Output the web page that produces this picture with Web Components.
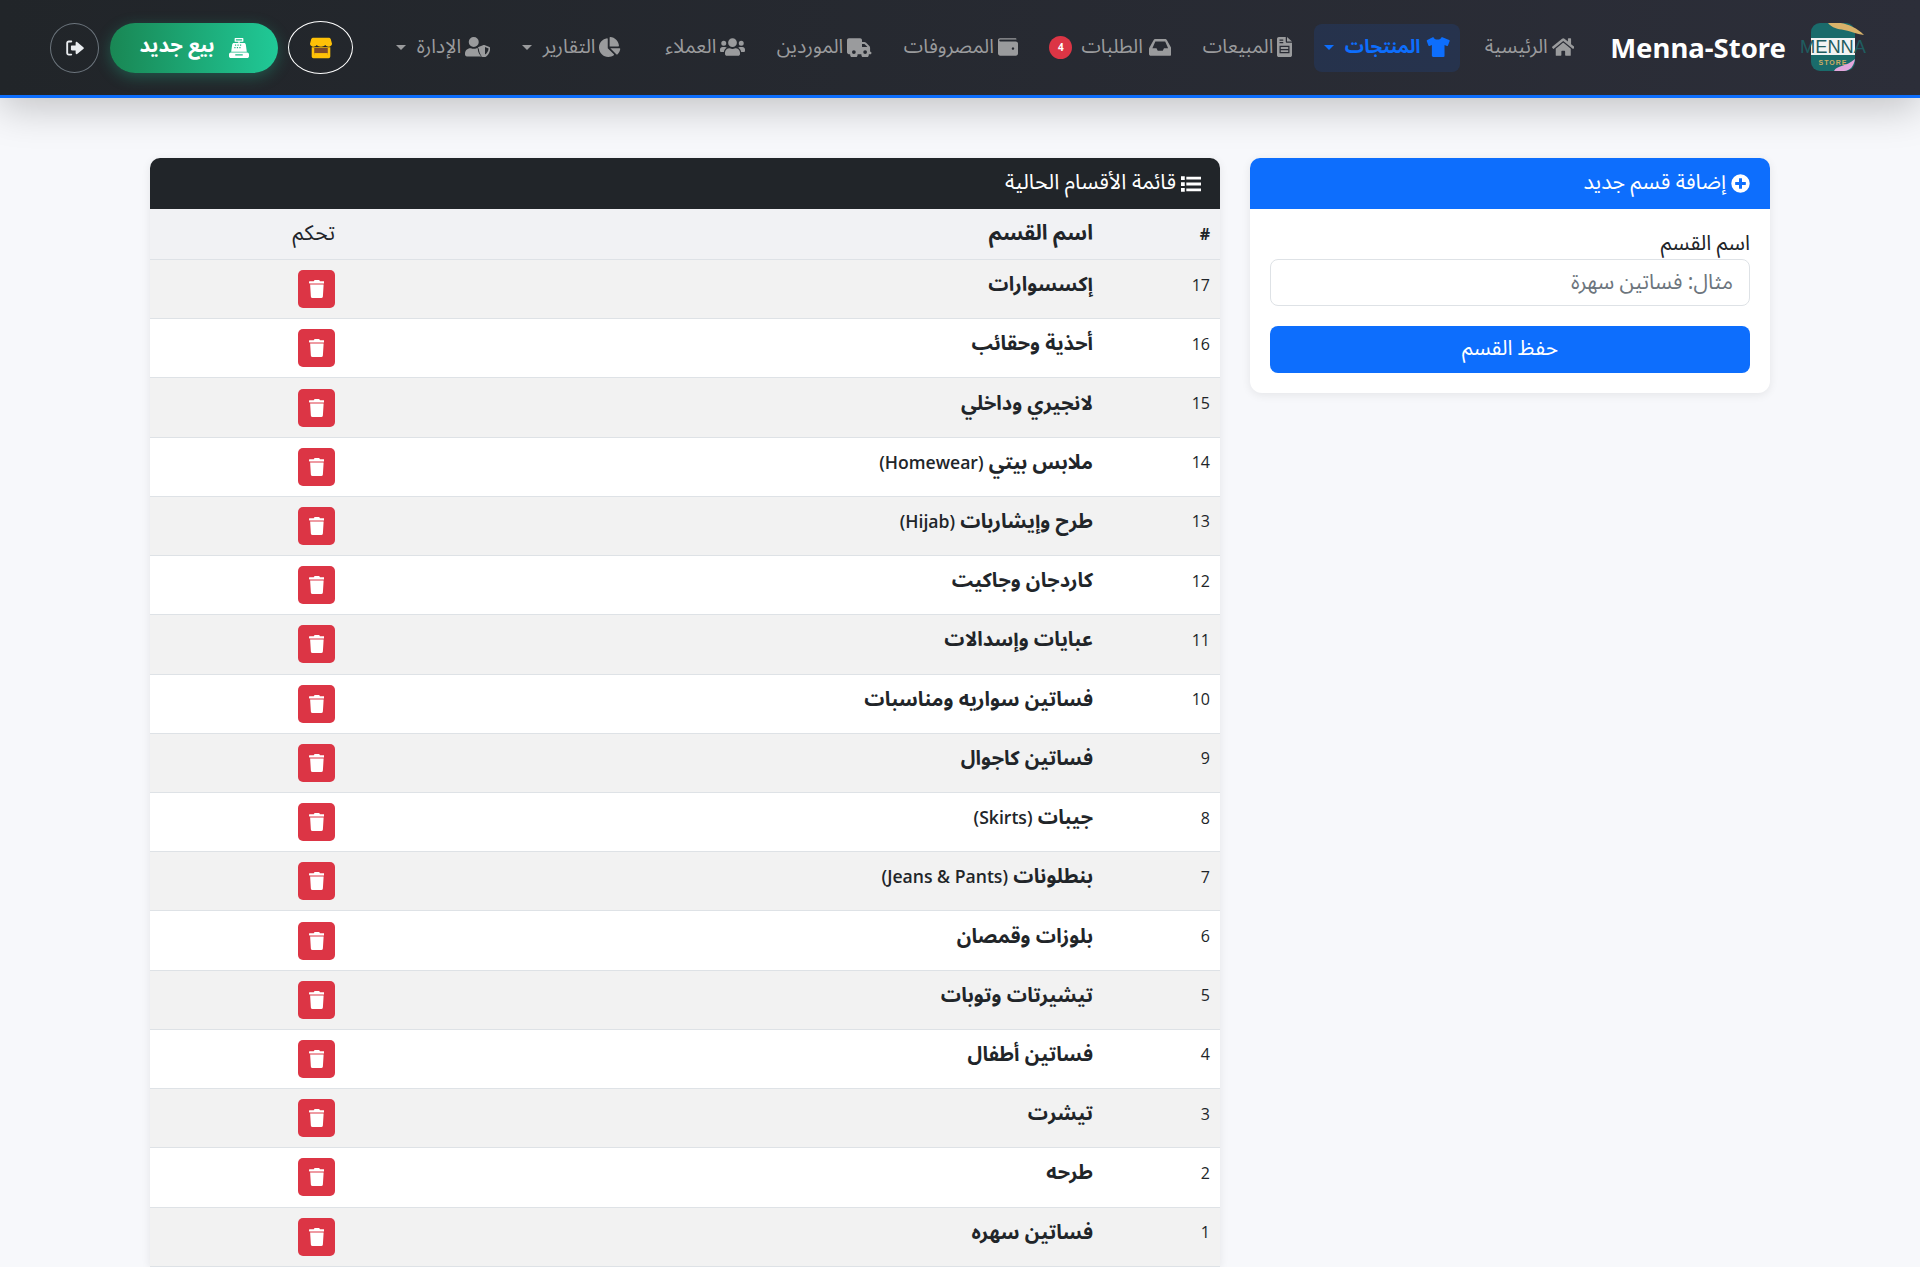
<!DOCTYPE html>
<html lang="ar" dir="rtl">
<head>
<meta charset="utf-8">
<title>Menna-Store</title>
<style>
    html, body { margin: 0; padding: 0; }
    body {
        background: #f7f8fb;
        color: #212529;
        font-family: "Noto Sans Arabic", "Open Sans", "DejaVu Sans", sans-serif;
        font-size: 16px;
    }
</style>
</head>
<body>
<app-navbar></app-navbar>
<main-layout>
    <category-table slot="table"></category-table>
    <add-category slot="form"></add-category>
</main-layout>

<script>
const ICONS = {
    home: ['0 0 576 512', 'M280.37 148.26L96 300.11V464a16 16 0 0 0 16 16l112.06-.29a16 16 0 0 0 15.92-16V368a16 16 0 0 1 16-16h64a16 16 0 0 1 16 16v95.64a16 16 0 0 0 16 16.05L464 480a16 16 0 0 0 16-16V300L295.67 148.26a12.19 12.19 0 0 0-15.3 0zM571.6 251.47L488 182.56V44.05a12 12 0 0 0-12-12h-56a12 12 0 0 0-12 12v72.61L318.47 43a48 48 0 0 0-61 0L4.34 251.47a12 12 0 0 0-1.6 16.9l25.5 31A12 12 0 0 0 45.15 301l235.22-193.74a12.19 12.19 0 0 1 15.3 0L530.9 301a12 12 0 0 0 16.9-1.6l25.5-31a12 12 0 0 0-1.7-16.93z'],
    shirt: ['0 0 640 512', 'M211 0c14 40 58 66 109 66s95-26 109-66l190 76c11 4 17 17 13 28l-44 112c-4 11-17 17-28 12l-60-24v284c0 13-11 24-24 24H200c-13 0-24-11-24-24V204l-60 24c-11 5-24-1-28-12L44 104c-4-11 2-24 13-28z'],
    invoice: ['0 0 384 512', 'M48 0h176v112c0 18 14 32 32 32h128v320c0 27-21 48-48 48H48c-27 0-48-21-48-48V48C0 21 21 0 48 0zm208 0l128 112H256zM64 64v32h96V64zm0 64v32h96v-32zm0 96v192h256V224zm32 32h192v48H96zm0 80h192v48H96z'],
    inbox: ['0 0 576 512', 'M568 277L460 80c-10-18-29-32-50-32H166c-21 0-40 14-50 32L8 277c-5 9-8 19-8 29v126c0 26 22 48 48 48h480c26 0 48-22 48-48V306c0-10-3-20-8-29zM162 112h252l75 176H384l-32 64H224l-32-64H87z'],
    wallet: ['0 0 512 512', 'M48 32h400c13 0 24 11 24 24v8H56c-13 0-24 11-24 24s11 24 24 24h400c31 0 56 25 56 56v256c0 31-25 56-56 56H56c-31 0-56-25-56-56V80c0-27 21-48 48-48zm368 264a32 32 0 1 0 0 1z'],
    truck: ['0 0 640 512', 'M48 32h288c26 0 48 22 48 48v48h60c17 0 33 7 45 19l83 83c12 12 19 28 19 45v101h16c9 0 16 7 16 16v32c0 9-7 16-16 16h-48a96 96 0 0 1-192 0H272a96 96 0 0 1-192 0H48c-26 0-48-22-48-48V80c0-26 22-48 48-48zm336 144v80h136v-6l-74-74zM176 432a48 48 0 1 0 0-96 48 48 0 0 0 0 96zm288 0a48 48 0 1 0 0-96 48 48 0 0 0 0 96z'],
    users: ['0 0 640 512', 'M96 224a64 64 0 1 0 0-128 64 64 0 0 0 0 128zm448 0a64 64 0 1 0 0-128 64 64 0 0 0 0 128zm32 32h-64c-18 0-34 7-45 19 40 22 69 62 75 109h66c18 0 32-14 32-32v-32c0-35-29-64-64-64zm-256 0a112 112 0 1 0 0-224 112 112 0 0 0 0 224zm77 32h-8a157 157 0 0 1-138 0h-8c-64 0-115 52-115 115v29c0 26 21 48 48 48h288c27 0 48-22 48-48v-29c0-63-51-115-115-115zm-224-13c-11-12-27-19-45-19H64c-35 0-64 29-64 64v32c0 18 14 32 32 32h66c6-47 35-87 75-109z'],
    pie: ['0 0 544 512', 'M527 288H290l158 158c6 6 16 7 23 1 39-36 65-85 73-141 1-10-7-18-17-18zm-16-64C503 103 407 8 288 0c-9-1-16 7-16 16v224h224c9 0 16-7 15-16zM224 288V51c0-10-8-18-18-17C87 51-4 155 0 280c4 129 115 234 244 232 50-1 97-17 135-44 8-6 8-17 1-24z'],
    admin: ['0 0 640 512', 'M224 256a128 128 0 1 0 0-256 128 128 0 0 0 0 256zm88 32h-17a174 174 0 0 1-142 0h-17C61 288 0 349 0 424v24c0 27 21 48 48 48h352c9 0 17-2 25-5-42-52-66-120-73-196-13-4-27-7-40-7zm313-32l-128-50a32 32 0 0 0-23 0l-128 50c-12 5-20 16-20 29 0 125 72 211 148 240 7 3 16 3 23 0 61-23 148-100 148-240 0-13-8-24-20-29zM512 447V256l92 36c-6 80-52 131-92 155z'],
    register: ['0 0 512 512', 'M160 0h192c9 0 16 7 16 16v64c0 9-7 16-16 16h-80v32h112c24 0 44 18 47 42l25 182H56l25-182c3-24 23-42 47-42h112V96h-80c-9 0-16-7-16-16V16c0-9 7-16 16-16zm16 32v32h160V32zm-24 136v32h32v-32zm64 0v32h32v-32zm64 0v32h32v-32zm-144 64v32h32v-32zm64 0v32h32v-32zm64 0v32h32v-32zM48 368h416c26 0 48 22 48 48v48c0 26-22 48-48 48H48c-26 0-48-22-48-48v-48c0-26 22-48 48-48zm112 48v32h192v-32z'],
    logout: ['0 0 512 512', 'M96 64h64c13 0 24 11 24 24s-11 24-24 24H96c-9 0-16 7-16 16v256c0 9 7 16 16 16h64c13 0 24 11 24 24s-11 24-24 24H96c-35 0-64-29-64-64V128c0-35 29-64 64-64zm214 39l166 137c9 8 9 24 0 32L310 409c-13 11-38 3-38-16v-73H176c-13 0-24-11-24-24v-80c0-13 11-24 24-24h96v-73c0-19 25-27 38-16z'],
    plus: ['0 0 512 512', 'M256 8a248 248 0 1 0 0 496 248 248 0 0 0 0-496zm144 276c0 7-5 12-12 12h-92v92c0 7-5 12-12 12h-56c-7 0-12-5-12-12v-92h-92c-7 0-12-5-12-12v-56c0-7 5-12 12-12h92v-92c0-7 5-12 12-12h56c7 0 12 5 12 12v92h92c7 0 12 5 12 12z'],
    list: ['0 0 512 512', 'M0 56h96v96H0zm0 152h96v96H0zm0 152h96v96H0zM136 68h376v72H136zm0 152h376v72H136zm0 152h376v72H136z'],
    trash: ['0 0 448 512', 'M432 32H312l-9.4-18.7A24 24 0 0 0 281.1 0H166.8a23.72 23.72 0 0 0-21.4 13.3L136 32H16A16 16 0 0 0 0 48v32a16 16 0 0 0 16 16h416a16 16 0 0 0 16-16V48a16 16 0 0 0-16-16zM53.2 467a48 48 0 0 0 47.9 45h245.8a48 48 0 0 0 47.9-45L416 128H32z']
};

function icon(name, h) {
    const [box, d] = ICONS[name];
    const p = box.split(' ');
    const w = h * p[2] / p[3];
    return `<svg width="${w}" height="${h}" viewBox="${box}" fill="currentColor" aria-hidden="true"><path fill-rule="evenodd" d="${d}"/></svg>`;
}

class NavItem extends HTMLElement {
    connectedCallback() {
        const badge = this.getAttribute('badge');
        const caret = this.hasAttribute('caret');
        this.attachShadow({ mode: 'open' });
        this.shadowRoot.innerHTML = `
            <style>
                :host {
                    display: flex;
                    align-items: center;
                    height: 48px;
                    padding: 0 10px;
                    gap: 4px;
                    border-radius: 8px;
                    color: #9a9b9d;
                    font-size: 19.6px;
                    line-height: 26px;
                    white-space: nowrap;
                }
                :host([active]) {
                    background: rgba(13, 110, 253, .12);
                    color: #0d6efd;
                    font-weight: 700;
                    font-size: 19px;
                }
                .caret {
                    border-top: 5px solid currentColor;
                    border-left: 5px solid transparent;
                    border-right: 5px solid transparent;
                    margin-right: 7px;
                }
                .badge {
                    background: #dc3545;
                    color: #fff;
                    font-size: 10px;
                    font-weight: 700;
                    width: 23px;
                    height: 23px;
                    border-radius: 50%;
                    display: flex;
                    align-items: center;
                    justify-content: center;
                    margin-right: 3px;
                }
                .label { margin-bottom: 1px; }
                svg { display: block; margin-bottom: 2px; }
            </style>
            ${icon(this.getAttribute('icon'), 20)}
            <span class="label"><slot></slot></span>
            ${badge ? `<span class="badge">${badge}</span>` : ''}
            ${caret ? '<span class="caret"></span>' : ''}
        `;
    }
}

class AppNavbar extends HTMLElement {
    connectedCallback() {
        this.attachShadow({ mode: 'open' });
        this.shadowRoot.innerHTML = `
            <style>
                :host {
                    display: flex;
                    align-items: center;
                    height: 95px;
                    padding: 0 52px 0 50px;
                    background: linear-gradient(to left, #2c2e39, #212529);
                    border-bottom: 3px solid #0d6efd;
                    box-shadow: 0 10px 40px rgba(0, 0, 0, .22);
                }
                .logo { display: block; flex: none; }
                .brand {
                    color: #fff;
                    font: 700 27.5px "Noto Sans", "Open Sans", sans-serif;
                    margin: 0 12px 0 26px;
                    white-space: nowrap;
                }
                .links { display: flex; align-items: center; gap: 11.5px; flex: 1; }
                .store {
                    width: 65px;
                    height: 53px;
                    box-sizing: border-box;
                    border: 1px solid #fff;
                    border-radius: 50%;
                    display: flex;
                    align-items: center;
                    justify-content: center;
                }
                .sell {
                    width: 168px;
                    height: 50px;
                    margin-right: 10px;
                    border-radius: 25px;
                    background: linear-gradient(to left, #20c997, #198754);
                    box-shadow: 0 4px 15px rgba(32, 201, 151, .3);
                    color: #fff;
                    font-weight: 700;
                    font-size: 20.4px;
                    line-height: 26px;
                    display: flex;
                    align-items: center;
                    justify-content: center;
                    gap: 14px;
                }
                .sell span { margin-bottom: 3px; }
                .out {
                    width: 49px;
                    height: 50px;
                    margin-right: 11px;
                    box-sizing: border-box;
                    border: 1px solid #6c757d;
                    border-radius: 50%;
                    display: flex;
                    align-items: center;
                    justify-content: center;
                    color: #e9ecef;
                }
            </style>
            <svg class="logo" width="70" height="50" viewBox="0 0 70 50">
                <rect x="13" y="0" width="44" height="48" rx="9" fill="#1a6b6b"/>
                <path d="M30 0c12-2 26 2 36 12-8-1-14-4-20-5-6-1-12-2-16-7z" fill="#d8b26a"/>
                <rect x="13" y="15" width="44" height="17" fill="#f2f3f3"/>
                <text x="35" y="30" text-anchor="middle" font-family="Liberation Sans, sans-serif" font-size="18" fill="#1f5d60" textLength="66" lengthAdjust="spacingAndGlyphs" direction="ltr">MENNA</text>
                <text x="35" y="42" text-anchor="middle" font-family="Liberation Sans, sans-serif" font-size="7" font-weight="700" fill="#c9ab62" letter-spacing="1" direction="ltr">STORE</text>
                <path d="M57 36c-1 7-5 12-11 12H36c3-6 12-4 21-12z" fill="#e3a6dc"/>
            </svg>
            <span class="brand" dir="ltr">Menna-Store</span>
            <div class="links">
                <nav-item icon="home" style="padding-left: 13.7px">الرئيسية</nav-item>
                <nav-item icon="shirt" active caret>المنتجات</nav-item>
                <nav-item icon="invoice">المبيعات</nav-item>
                <nav-item icon="inbox" badge="4" style="gap: 6px">الطلبات</nav-item>
                <nav-item icon="wallet">المصروفات</nav-item>
                <nav-item icon="truck">الموردين</nav-item>
                <nav-item icon="users" style="padding-left: 23px">العملاء</nav-item>
                <nav-item icon="pie" caret>التقارير</nav-item>
                <nav-item icon="admin" caret>الإدارة</nav-item>
            </div>
            <div class="store">
                <svg width="22" height="22" viewBox="0 0 26 24">
                    <path fill="#ffc107" d="M4 0h18c1 0 2 .5 2.500 1.500L26 7c0 2-2 3.500-4 3.500-1.500 0-3-.7-4-2-1 1.300-3 2-5 2s-4-.7-5-2c-1 1.300-2.500 2-4 2C2 10.500 0 9 0 7l1.500-5.500C2 .5 3 0 4 0z"/>
                    <path fill="#ffc107" d="M2 11h22v11c0 1-1 2-2 2H4c-1 0-2-1-2-2z"/>
                    <rect x="5" y="12" width="16" height="8" fill="#7d4a2a"/>
                    <rect x="5" y="18" width="16" height="2.500" fill="#ffc107"/>
                </svg>
            </div>
            <div class="sell">${icon('register', 20)}<span>بيع جديد</span></div>
            <div class="out">${icon('logout', 20)}</div>
        `;
    }
}

class MainLayout extends HTMLElement {
    constructor() {
        super();
        this.attachShadow({ mode: 'open' });
        this.shadowRoot.innerHTML = `
            <style>
                :host {
                    display: grid;
                    grid-template-columns: 520px 1070px;
                    gap: 30px;
                    padding: 60px 150px 40px;
                    align-items: start;
                }
            </style>
            <slot name="form"></slot>
            <slot name="table"></slot>
        `;
    }
}

class AddCategory extends HTMLElement {
    constructor() {
        super();
        this.attachShadow({ mode: 'open' });
        this.shadowRoot.innerHTML = `
            <style>
                :host {
                    display: block;
                    background: #fff;
                    border-radius: 10px 10px 12px 12px;
                    overflow: hidden;
                    box-shadow: 0 2px 10px rgba(0, 0, 0, .08);
                    line-height: 28px;
                }
                .head {
                    height: 51px;
                    background: #0d6efd;
                    color: #fff;
                    display: flex;
                    align-items: center;
                    gap: 5px;
                    padding: 0 20px;
                    font-size: 21.3px;
                }
                .head span { margin-bottom: 2px; }
                .body { padding: 20px; }
                label { display: block; font-size: 21px; height: 30px; line-height: 28px; color: #212529; }
                .input {
                    height: 47px;
                    box-sizing: border-box;
                    border: 1px solid #dee2e6;
                    border-radius: 8px;
                    padding: 0 16px 1px;
                    display: flex;
                    align-items: center;
                    color: #6c757d;
                    font-size: 21px;
                }
                .btn {
                    height: 47px;
                    margin-top: 20px;
                    padding-bottom: 3px;
                    box-sizing: border-box;
                    background: #0d6efd;
                    color: #fff;
                    border-radius: 8px;
                    display: flex;
                    align-items: center;
                    justify-content: center;
                    font-size: 21px;
                }
                svg { display: block; }
            </style>
            <div class="head">${icon('plus', 19)}<span>إضافة قسم جديد</span></div>
            <div class="body">
                <label>اسم القسم</label>
                <div class="input">مثال: فساتين سهرة</div>
                <div class="btn">حفظ القسم</div>
            </div>
        `;
    }
}

class CategoryRow extends HTMLElement {
    connectedCallback() {
        this.attachShadow({ mode: 'open' });
        const name = this.getAttribute('name');
        const latin = this.getAttribute('latin');
        this.shadowRoot.innerHTML = `
            <style>
                :host {
                    display: grid;
                    grid-template-columns: 117px 1fr 195px;
                    align-items: center;
                    height: 59.23px;
                    box-sizing: border-box;
                    border-bottom: 1px solid #dee2e6;
                    background: #fff;
                }
                :host(:nth-child(odd)) { background: #f2f2f2; }
                .id { padding: 0 10px 9px; color: #212529; font: 400 16px "Open Sans", sans-serif; line-height: 24px; }
                .name { padding: 0 10px 8px; font-weight: 700; font-size: 20px; line-height: 26px; color: #212529; }
                .lat { font: 600 17.6px "Open Sans", sans-serif; }
                .ctl { padding: 0 10px; }
                .del {
                    width: 37px;
                    height: 38px;
                    background: #dc3545;
                    border-radius: 5px;
                    color: #fff;
                    display: flex;
                    align-items: center;
                    justify-content: center;
                }
                svg { display: block; }
            </style>
            <div class="id">${this.getAttribute('num')}</div>
            <div class="name">${name}${latin ? ` <span class="lat">(${latin})</span>` : ''}</div>
            <div class="ctl"><div class="del">${icon('trash', 18)}</div></div>
        `;
    }
}

const CATEGORIES = [
    [17, 'إكسسوارات'], [16, 'أحذية وحقائب'], [15, 'لانجيري وداخلي'], [14, 'ملابس بيتي', 'Homewear'],
    [13, 'طرح وإيشاربات', 'Hijab'], [12, 'كاردجان وجاكيت'], [11, 'عبايات وإسدالات'], [10, 'فساتين سواريه ومناسبات'],
    [9, 'فساتين كاجوال'], [8, 'جيبات', 'Skirts'], [7, 'بنطلونات', 'Jeans &amp; Pants'], [6, 'بلوزات وقمصان'],
    [5, 'تيشيرتات وتوبات'], [4, 'فساتين أطفال'], [3, 'تيشرت'], [2, 'طرحه'], [1, 'فساتين سهره']
];

class CategoryTable extends HTMLElement {
    constructor() {
        super();
        this.attachShadow({ mode: 'open' });
        const rows = CATEGORIES.map(c => `<category-row num="${c[0]}" name="${c[1]}"${c[2] ? ` latin="${c[2]}"` : ''}></category-row>`).join('');
        this.shadowRoot.innerHTML = `
            <style>
                :host {
                    display: block;
                    background: #fff;
                    border-radius: 10px 10px 0 0;
                    overflow: hidden;
                    box-shadow: 0 2px 10px rgba(0, 0, 0, .08);
                }
                .head {
                    height: 51px;
                    background: #212529;
                    color: #fff;
                    display: flex;
                    align-items: center;
                    gap: 5px;
                    padding: 0 19px;
                    font-size: 21.3px;
                    line-height: 28px;
                }
                .head span { margin-bottom: 2px; }
                .thead {
                    display: grid;
                    grid-template-columns: 117px 1fr 195px;
                    align-items: center;
                    height: 51px;
                    box-sizing: border-box;
                    background: #f1f2f4;
                    border-bottom: 1px solid #dee2e6;
                    font-size: 21.2px;
                    line-height: 28px;
                }
                .thead div { padding: 0 10px; }
                .thead div:nth-child(2) { font-weight: 700; }
                .thead div:nth-child(1) { font: 700 16px "Open Sans", sans-serif; }
                svg { display: block; }
            </style>
            <div class="head">${icon('list', 20)}<span>قائمة الأقسام الحالية</span></div>
            <div class="thead"><div>#</div><div>اسم القسم</div><div>تحكم</div></div>
            <div>${rows}</div>
        `;
    }
}

customElements.define('nav-item', NavItem);
customElements.define('app-navbar', AppNavbar);
customElements.define('main-layout', MainLayout);
customElements.define('add-category', AddCategory);
customElements.define('category-row', CategoryRow);
customElements.define('category-table', CategoryTable);
</script>
</body>
</html>
